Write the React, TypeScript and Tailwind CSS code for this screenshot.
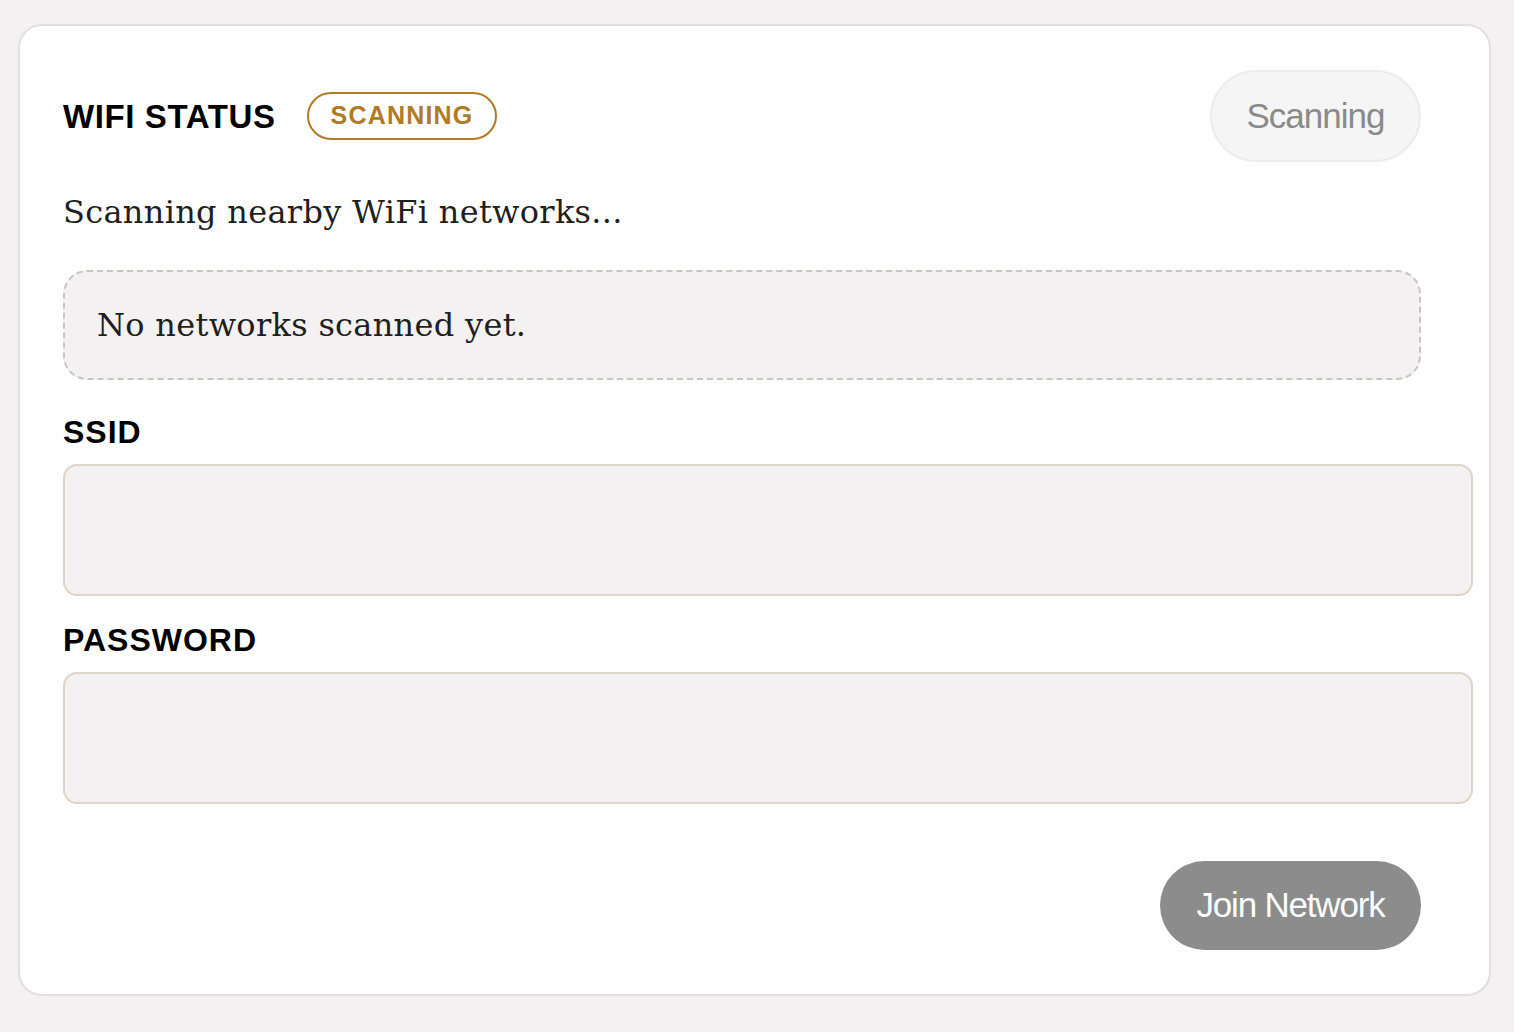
const sans = "font-['Liberation_Sans',Arial,sans-serif]";
const serif = "font-['DejaVu_Serif','Liberation_Serif',serif]";

const Field = ({ label, type }: { label: string; type: string }) => {
  return (
    <label className="block">
      <span
        className={`block text-[32px] leading-[40px] font-bold tracking-[1px] text-black ${sans}`}
      >
        {label}
      </span>
      <input
        type={type}
        className="mt-[12px] block h-[132px] w-[1410px] rounded-[14px] border-2 border-[#ddd4cc] bg-[#f3f1f1] px-6 outline-none"
      />
    </label>
  );
};

const App = () => {
  return (
    <div className="min-h-screen bg-[#f3f1f1] pt-[24px] pl-[18px]">
      <div className="w-[1473px] rounded-[24px] border-2 border-[#e3e0dc] bg-white pt-[44px] pr-[68px] pb-[44px] pl-[43px]">
        <div className="flex h-[92px] items-center justify-between">
          <div className="flex items-center gap-[31px]">
            <h2
              className={`text-[33px] leading-none font-bold tracking-[0.6px] text-black ${sans}`}
            >
              WIFI STATUS
            </h2>
            <span
              className={`flex h-[48px] items-center rounded-full border-2 border-[#b07a26] px-[22px] text-[25px] font-bold tracking-[1.2px] text-[#b07a26] ${sans}`}
            >
              SCANNING
            </span>
          </div>
          <button
            className={`h-[92px] w-[211px] rounded-full border-2 border-[#ececec] bg-[#f5f5f5] text-[35px] tracking-[-1px] text-[#8a8a8a] ${sans}`}
          >
            Scanning
          </button>
        </div>

        <p
          className={`mt-[30px] text-[32px] leading-[40px] tracking-[0.3px] text-[#1f1f1f] ${serif}`}
        >
          Scanning nearby WiFi networks...
        </p>

        <div
          className={`mt-[38px] flex h-[110px] items-center rounded-[24px] border-2 border-dashed border-[#c9c5c1] bg-[#f3f1f1] pl-[32px] text-[32px] tracking-[0.3px] text-[#1f1f1f] ${serif}`}
        >
          No networks scanned yet.
        </div>

        <div className="mt-[32px] flex flex-col gap-[24px]">
          <Field label="SSID" type="text" />
          <Field label="PASSWORD" type="password" />
        </div>

        <div className="mt-[57px] flex justify-end">
          <button
            className={`h-[89px] w-[261px] rounded-full bg-[#8c8c8c] text-[35px] tracking-[-1.2px] text-white ${sans}`}
          >
            Join Network
          </button>
        </div>
      </div>
    </div>
  );
};

export default App;
